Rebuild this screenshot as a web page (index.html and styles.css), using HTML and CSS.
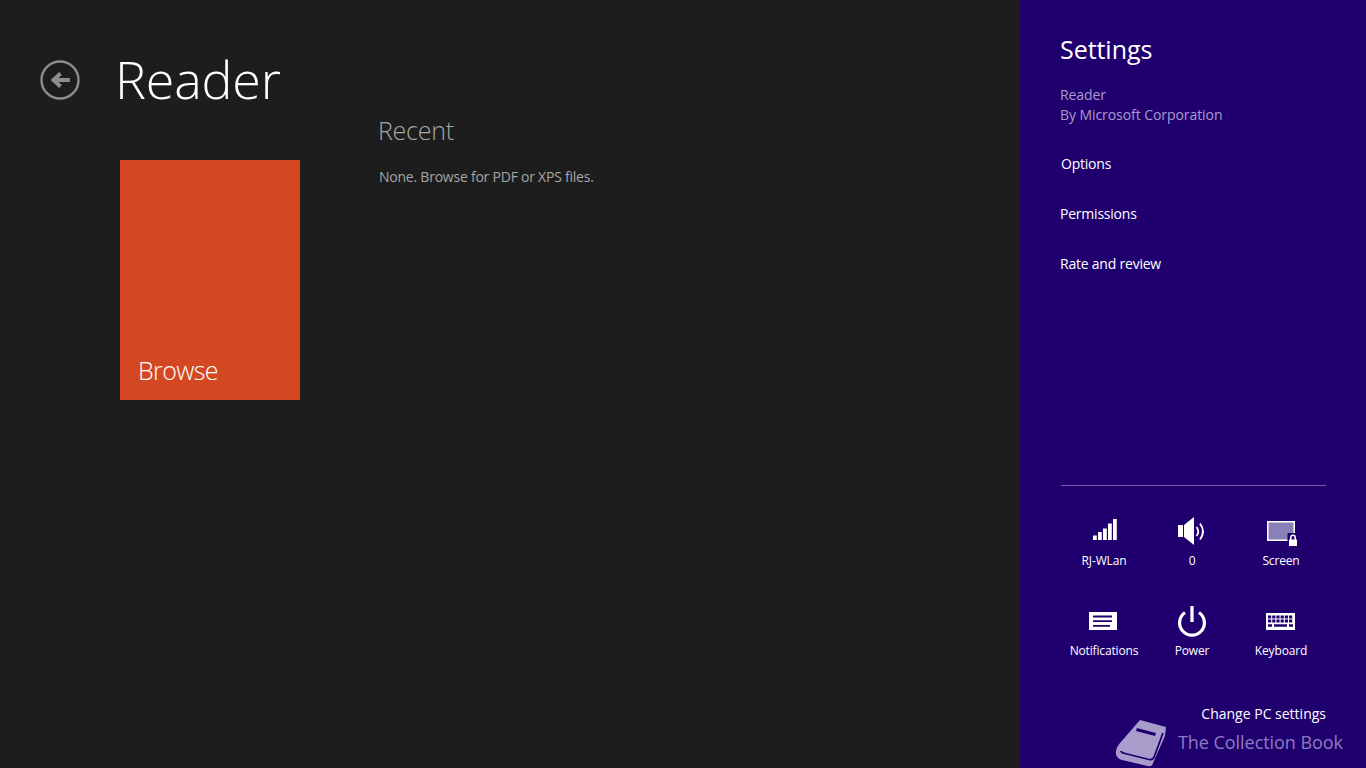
FILE: index.html
```html
<!DOCTYPE html>
<html lang="en">
<head>
<meta charset="utf-8">
<title>Reader</title>
<link rel="stylesheet" href="styles.css">
</head>
<body>
<div class="app">
  <main class="main">
    <header class="header">
      <svg class="back" viewBox="0 0 40 40" width="40" height="40" aria-label="Back">
        <circle cx="20" cy="20" r="18.5" fill="none" stroke="#8c8c8c" stroke-width="2.4"/>
        <path d="M30 20H14M20.5 13.5L13.5 20l7 6.5" fill="none" stroke="#8c8c8c" stroke-width="4"/>
      </svg>
      <h1 class="title">Reader</h1>
    </header>
    <div class="content">
      <div class="tile"><span class="tile-label">Browse</span></div>
      <section class="recent">
        <h2 class="recent-title">Recent</h2>
        <p class="recent-text">None. Browse for PDF or XPS files.</p>
      </section>
    </div>
  </main>
  <aside class="panel">
    <h2 class="panel-title">Settings</h2>
    <div class="app-info">
      <div>Reader</div>
      <div>By Microsoft Corporation</div>
    </div>
    <nav class="links">
      <a class="link link-first">Options</a>
      <a class="link">Permissions</a>
      <a class="link">Rate and review</a>
    </nav>
    <div class="spacer"></div>
    <div class="divider"></div>
    <div class="grid">
      <div class="cell">
        <svg class="icon" width="32" height="32" viewBox="0 0 32 32"><path fill="#fff" d="M5 20.500h3.800V25H5zM10 17h3.800v8H10zM15 13.500h3.800V25H15zM20 8.500h3.800V25H20zM25 4h3.800v21H25z"/></svg>
        <span class="label">RJ-WLan</span>
      </div>
      <div class="cell">
        <svg class="icon" width="32" height="32" viewBox="0 0 32 32"><path fill="#fff" d="M2 10h5v12H2zM8 10l10-8v28L8 22z"/><path fill="none" stroke="#fff" stroke-width="1.800" d="M20.500 12q3.500 4.500 0 9M24 8.500q6 8 0 16"/></svg>
        <span class="label">0</span>
      </div>
      <div class="cell">
        <svg class="icon" width="32" height="32" viewBox="0 0 32 32"><rect x="2.750" y="6.750" width="26.500" height="18.500" fill="#8a80b8" stroke="#fff" stroke-width="1.500"/><rect x="22.500" y="18" width="11" height="14" fill="#20006f"/><rect x="24" y="24.500" width="8" height="6.500" fill="#fff"/><path fill="none" stroke="#fff" stroke-width="1.500" d="M25.800 25v-2.500a2.200 2.200 0 0 1 4.400 0V25"/></svg>
        <span class="label">Screen</span>
      </div>
      <div class="cell">
        <svg class="icon" width="32" height="32" viewBox="0 0 32 32"><rect x="1" y="7" width="28" height="18" fill="#fff"/><path stroke="#20006f" stroke-width="1.800" d="M5 11.500h19M5 16.200h19M5 20.800h17"/></svg>
        <span class="label">Notifications</span>
      </div>
      <div class="cell">
        <svg class="icon" width="32" height="32" viewBox="0 0 32 32"><path fill="none" stroke="#fff" stroke-width="3.200" d="M9 7.500a12.400 12.400 0 1 0 14 0"/><path stroke="#fff" stroke-width="3.200" d="M16 1v16"/></svg>
        <span class="label">Power</span>
      </div>
      <div class="cell">
        <svg class="icon" width="32" height="32" viewBox="0 0 32 32"><rect x="1" y="8" width="29" height="17" fill="#fff"/><path stroke="#20006f" stroke-width="3" stroke-dasharray="3.200 1" d="M3 12h25M3 16h25"/><path stroke="#20006f" stroke-width="2.500" d="M3 20.500h4M9 20.500h13M24 20.500h4"/></svg>
        <span class="label">Keyboard</span>
      </div>
    </div>
    <a class="change">Change PC settings</a>
    <div class="watermark">
      <svg width="54" height="50" viewBox="0 0 54 50"><path fill="#a89ccb" fill-rule="evenodd" d="M25 2L51 9L50 18L38 45Q37 49 33 48L7 42Q0 40 1 33Q2 28 5 25ZM22 10L41 15L40 18L21 13Z"/><path fill="none" stroke="#20006f" stroke-width="1.800" d="M48 15L39.500 38Q38 42.500 34 41.500L10 35.500Q6 34.500 6 33"/></svg>
      <span class="watermark-text">The Collection Book</span>
    </div>
  </aside>
</div>
</body>
</html>
```
FILE: styles.css
```css
* { box-sizing: border-box; }
html, body { margin: 0; height: 100%; overflow: hidden; }
body { font-family: "Open Sans", "Noto Sans", sans-serif; background: #1d1d1d; }
.app { display: flex; width: 1366px; height: 768px; }
.main { width: 1020px; background: #1d1d1d; padding: 40px 0 0 40px; }
.header { display: flex; align-items: center; height: 80px; margin-bottom: -6px; }
.back { display: block; }
.title { margin: 0 0 0 35px; padding-bottom: 2px; font-size: 52px; font-weight: 300; line-height: 78px; color: #fff; letter-spacing: -0.15px; }
.content { display: flex; align-items: flex-start; margin-left: 80px; }
.tile { width: 180px; height: 240px; margin-top: 46px; background: #d34822; display: flex; align-items: flex-end; padding: 0 0 13px 18px; }
.tile-label { font-size: 25px; font-weight: 300; color: #fff; line-height: 34px; letter-spacing: -0.6px; }
.recent { margin: -1px 0 0 78px; }
.recent-title { margin: 0; font-size: 25px; font-weight: 300; line-height: 34px; color: #a6a6a6; letter-spacing: -0.25px; }
.recent-text { margin: 20px 0 0 1px; font-size: 14px; font-weight: 400; line-height: 20px; color: #a6a6a6; letter-spacing: -0.23px; }
.panel { position: relative; width: 346px; height: 768px; background: #20006f; padding: 31px 40px 73px 40px; display: flex; flex-direction: column; color: #fff; }
.panel-title { margin: 0; font-size: 25px; font-weight: 400; line-height: 36px; letter-spacing: -0.05px; }
.app-info { margin-top: 18px; font-size: 14px; line-height: 20px; color: #a89ccb; letter-spacing: -0.07px; }
.links { display: flex; flex-direction: column; gap: 30px; margin-top: 29px; }
.link { font-size: 14px; line-height: 20px; letter-spacing: -0.22px; color: #fff; }
.link-first { margin-left: 1px; }
.spacer { flex: 1; }
.divider { height: 1px; background: #6f5fa6; margin: 0 0 0 1px; }
.grid { display: grid; grid-template-columns: 88px 88px 90px; grid-template-rows: 90px 90px; margin: 29px 0 0 0; }
.cell { display: flex; flex-direction: column; align-items: center; }
.icon { display: block; margin-bottom: 5px; flex: none; }
.label { font-size: 12px; line-height: 18px; letter-spacing: -0.15px; white-space: nowrap; }
.change { position: absolute; right: 40px; top: 704px; font-size: 14px; line-height: 20px; letter-spacing: 0; color: #fff; }
.watermark { position: absolute; left: 95px; top: 718px; display: flex; align-items: flex-start; }
.watermark-text { font-size: 18px; line-height: 26px; margin: 11px 0 0 9px; color: #8b7cc0; white-space: nowrap; letter-spacing: -0.05px; }
```
